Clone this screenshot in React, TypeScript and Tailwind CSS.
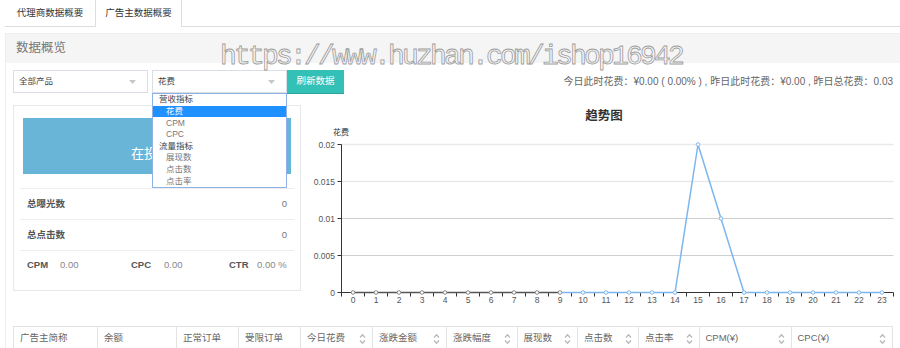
import React from 'react';

// Hourly spend for the trend chart (0..23)
const hours = Array.from({ length: 24 }, (_, i) => i);
const spend = hours.map((h) => (h === 15 ? 0.02 : h === 16 ? 0.01 : 0));

const AXIS_X = 40.5;
const STEP = 23;
const Y_ZERO = 187.5;
const Y_TOP = 39.5;
const px = (i: number) => AXIS_X + STEP / 2 + STEP * i;
const py = (v: number) => Y_ZERO - (v / 0.02) * (Y_ZERO - Y_TOP);

const gridLines = [
  { label: '0.02', y: 39.5, color: '#e9e9e9', width: 1.6 },
  { label: '0.015', y: 76.5, color: '#e9e9e9', width: 1.6 },
  { label: '0.01', y: 113.5, color: '#cfcfcf', width: 1 },
  { label: '0.005', y: 150.5, color: '#cfcfcf', width: 1 },
  { label: '0', y: 187.5, color: '#cfcfcf', width: 1 },
];

const dropdownItems = [
  { label: '营收指标', group: true },
  { label: '花费', active: true },
  { label: 'CPM' },
  { label: 'CPC' },
  { label: '流量指标', group: true },
  { label: '展现数' },
  { label: '点击数' },
  { label: '点击率' },
];

const columns = [
  { label: '广告主简称', cls: 'w-[84px]' },
  { label: '余额', cls: 'w-[79px]' },
  { label: '正常订单', cls: 'w-[62px]' },
  { label: '受限订单', cls: 'w-[62px]' },
  { label: '今日花费', cls: 'w-[72px]', sort: true },
  { label: '涨跌金额', cls: 'w-[74px]', sort: true },
  { label: '涨跌幅度', cls: 'w-[70.5px]', sort: true },
  { label: '展现数', cls: 'w-[60.5px]', sort: true },
  { label: '点击数', cls: 'w-[61px]', sort: true },
  { label: '点击率', cls: 'w-[60.5px]', sort: true },
  { label: 'CPM(¥)', cls: 'w-[92px]', sort: true },
  { label: 'CPC(¥)', cls: 'flex-1', sort: true },
];

function Caret() {
  return (
    <svg width="7" height="4" viewBox="0 0 7 4" className="shrink-0">
      <path d="M0 0 L7 0 L3.5 4 Z" fill="#c4c8cc" />
    </svg>
  );
}

function SortIcon() {
  return (
    <svg width="7" height="12" viewBox="0 0 7 12" className="shrink-0">
      <path d="M1 4.5 L3.5 1.8 L6 4.5" fill="none" stroke="#b9b9b9" strokeWidth="1.3" />
      <path d="M1 7.5 L3.5 10.2 L6 7.5" fill="none" stroke="#b9b9b9" strokeWidth="1.3" />
    </svg>
  );
}

function TrendChart() {
  const blue = '#7db6ee';
  const before = hours.slice(0, 10);
  const after = hours.slice(9);
  return (
    <svg width="600" height="210" className="overflow-visible" style={{ fontFamily: "'Liberation Sans', 'Noto Sans CJK SC', sans-serif" }}>
      <text x="303" y="9" textAnchor="middle" dominantBaseline="central" fontSize="12.5" fontWeight="bold" fill="#333" fontFamily="'Noto Sans CJK SC', sans-serif">
        趋势图
      </text>
      <text x="32" y="26" dominantBaseline="central" fontSize="8" fill="#333" fontFamily="'Noto Sans CJK SC', sans-serif">
        花费
      </text>

      {gridLines.map((g) => (
        <g key={g.label}>
          {g.label !== '0' && <line x1={AXIS_X} x2="592.5" y1={g.y} y2={g.y} stroke={g.color} strokeWidth={g.width} />}
          <line x1={AXIS_X - 4} x2={AXIS_X} y1={g.y} y2={g.y} stroke="#333" />
          <text x="34" y={g.y} textAnchor="end" dominantBaseline="central" fontSize="8.5" fill="#555">
            {g.label}
          </text>
        </g>
      ))}

      <line x1={AXIS_X} x2={AXIS_X} y1={Y_TOP} y2={Y_ZERO} stroke="#333" />
      <line x1={AXIS_X} x2="592.5" y1={Y_ZERO} y2={Y_ZERO} stroke="#333" />
      {Array.from({ length: 25 }, (_, k) => (
        <line key={k} x1={AXIS_X + STEP * k} x2={AXIS_X + STEP * k} y1={Y_ZERO} y2={Y_ZERO + 4} stroke="#333" />
      ))}
      {hours.map((h) => (
        <text key={h} x={px(h)} y="195" textAnchor="middle" dominantBaseline="central" fontSize="8.5" fill="#555">
          {h}
        </text>
      ))}

      <polyline points={after.map((h) => `${px(h)},${py(spend[h])}`).join(' ')} fill="none" stroke={blue} strokeWidth="1.5" />
      <polyline points={before.map((h) => `${px(h)},${py(spend[h])}`).join(' ')} fill="none" stroke="#555" strokeWidth="1.5" />
      {hours.map((h) => (
        <circle key={h} cx={px(h)} cy={py(spend[h])} r="1.8" fill="#fff" stroke={h < 10 ? '#888' : blue} strokeWidth="1" />
      ))}
    </svg>
  );
}

export default function App() {
  return (
    <div className="relative h-[348px] w-[900px] overflow-hidden bg-white pl-[5px] font-['Liberation_Sans','Noto_Sans_CJK_SC',sans-serif] text-[#333]">
      {/* Tabs */}
      <div className="flex h-[27px] border-b border-[#ddd]">
        <div className="flex h-[26px] w-[90px] items-center justify-center text-[9.5px]">代理商数据概要</div>
        <div className="-mb-px flex h-[27px] w-[87px] items-center justify-center border-x border-[#ddd] bg-white pb-px text-[9.5px]">
          广告主数据概要
        </div>
      </div>

      {/* Panel */}
      <div className="mt-[6px] border-l border-t border-[#eee]">
        <div className="flex h-[29px] items-center bg-[#f5f5f5] pl-[10px] text-[12.5px] text-[#777]">数据概览</div>

        <div className="pl-[7px] pr-[7px] pt-[7px]">
          {/* Filters */}
          <div className="flex h-[23px] items-center">
            <div className="flex h-[23px] w-[135px] items-center justify-between border border-[#d9dee5] bg-white pl-[5px] pr-[11px] text-[8.5px] text-[#444]">
              <span>全部产品</span>
              <Caret />
            </div>
            <div className="relative ml-[4px] flex h-[23px] w-[135px] items-center justify-between border border-[#d9dee5] bg-white pl-[5px] pr-[11px] text-[8.5px] text-[#444]">
              <span>花费</span>
              <Caret />
              <div className="absolute left-[-1px] top-[22px] z-10 w-[135px] border border-[#8eb1e8] bg-white py-0">
                {dropdownItems.map((it) => (
                  <div
                    key={it.label}
                    className={
                      it.active
                        ? 'flex h-[11.6px] items-center bg-[#1e90ff] pl-[13px] text-[8.5px] text-white'
                        : it.group
                          ? 'flex h-[11.6px] items-center pl-[6px] text-[8.5px] text-[#444]'
                          : 'flex h-[11.6px] items-center pl-[13px] text-[8.5px] text-[#777]'
                    }
                  >
                    {it.label}
                  </div>
                ))}
              </div>
            </div>
            <button className="flex h-[23px] w-[57px] items-center justify-center bg-[#33c0b7] text-[9.5px] text-white shadow-[0_1px_0_#2aa39b]">
              刷新数据
            </button>
            <div className="ml-auto text-[10px] text-[#666]">
              今日此时花费：¥0.00 ( 0.00% ) , 昨日此时花费：¥0.00 , 昨日总花费：0.03
            </div>
          </div>

          {/* Summary + chart */}
          <div className="mt-[12px] flex h-[186px]">
            <div className="h-[186px] w-[288px] shrink-0 border border-[#e8e8e8] px-[6px]">
              <div className="mx-[3px] mt-[12px] h-[56px] bg-[#68b5d7] pt-[27px] text-center text-[13px] leading-[17px] text-white">
                在投广告
              </div>
              <div className="mt-[14px] flex h-[31px] items-center justify-between border-t border-[#eee] px-[7px] text-[9.5px]">
                <span className="font-bold text-[#555]">总曝光数</span>
                <span className="text-[#777]">0</span>
              </div>
              <div className="flex h-[31px] items-center justify-between border-t border-[#eee] px-[7px] text-[9.5px]">
                <span className="font-bold text-[#555]">总点击数</span>
                <span className="text-[#777]">0</span>
              </div>
              <div className="flex h-[29px] items-center border-t border-[#eee] px-[7px] text-[9.5px]">
                <div className="flex w-[104px]">
                  <span className="w-[33px] font-bold text-[#555]">CPM</span>
                  <span className="text-[#888]">0.00</span>
                </div>
                <div className="flex w-[98px]">
                  <span className="w-[33px] font-bold text-[#555]">CPC</span>
                  <span className="text-[#888]">0.00</span>
                </div>
                <div className="flex">
                  <span className="w-[28px] font-bold text-[#555]">CTR</span>
                  <span className="text-[#888]">0.00 %</span>
                </div>
              </div>
            </div>
            <div className="flex-1">
              <TrendChart />
            </div>
          </div>

          {/* Table header */}
          <div className="mt-[35px] flex h-[24px] border-l border-t border-[#e3e3e3] text-[9.5px] text-[#666]">
            {columns.map((c) => (
              <div key={c.label} className={`${c.cls} flex items-center justify-between border-r border-[#e3e3e3] pl-[6px] pr-[6px]`}>
                <span>{c.label}</span>
                {c.sort && <SortIcon />}
              </div>
            ))}
          </div>
        </div>
      </div>

      {/* Watermark */}
      <div className="pointer-events-none absolute left-[220px] top-[43px] whitespace-nowrap font-['Liberation_Mono',monospace] text-[28px] leading-[28px] tracking-[-2.8px] text-transparent [-webkit-text-stroke:0.8px_#9c9c9c]">
        https://www.huzhan.com/ishop16942
      </div>
    </div>
  );
}
